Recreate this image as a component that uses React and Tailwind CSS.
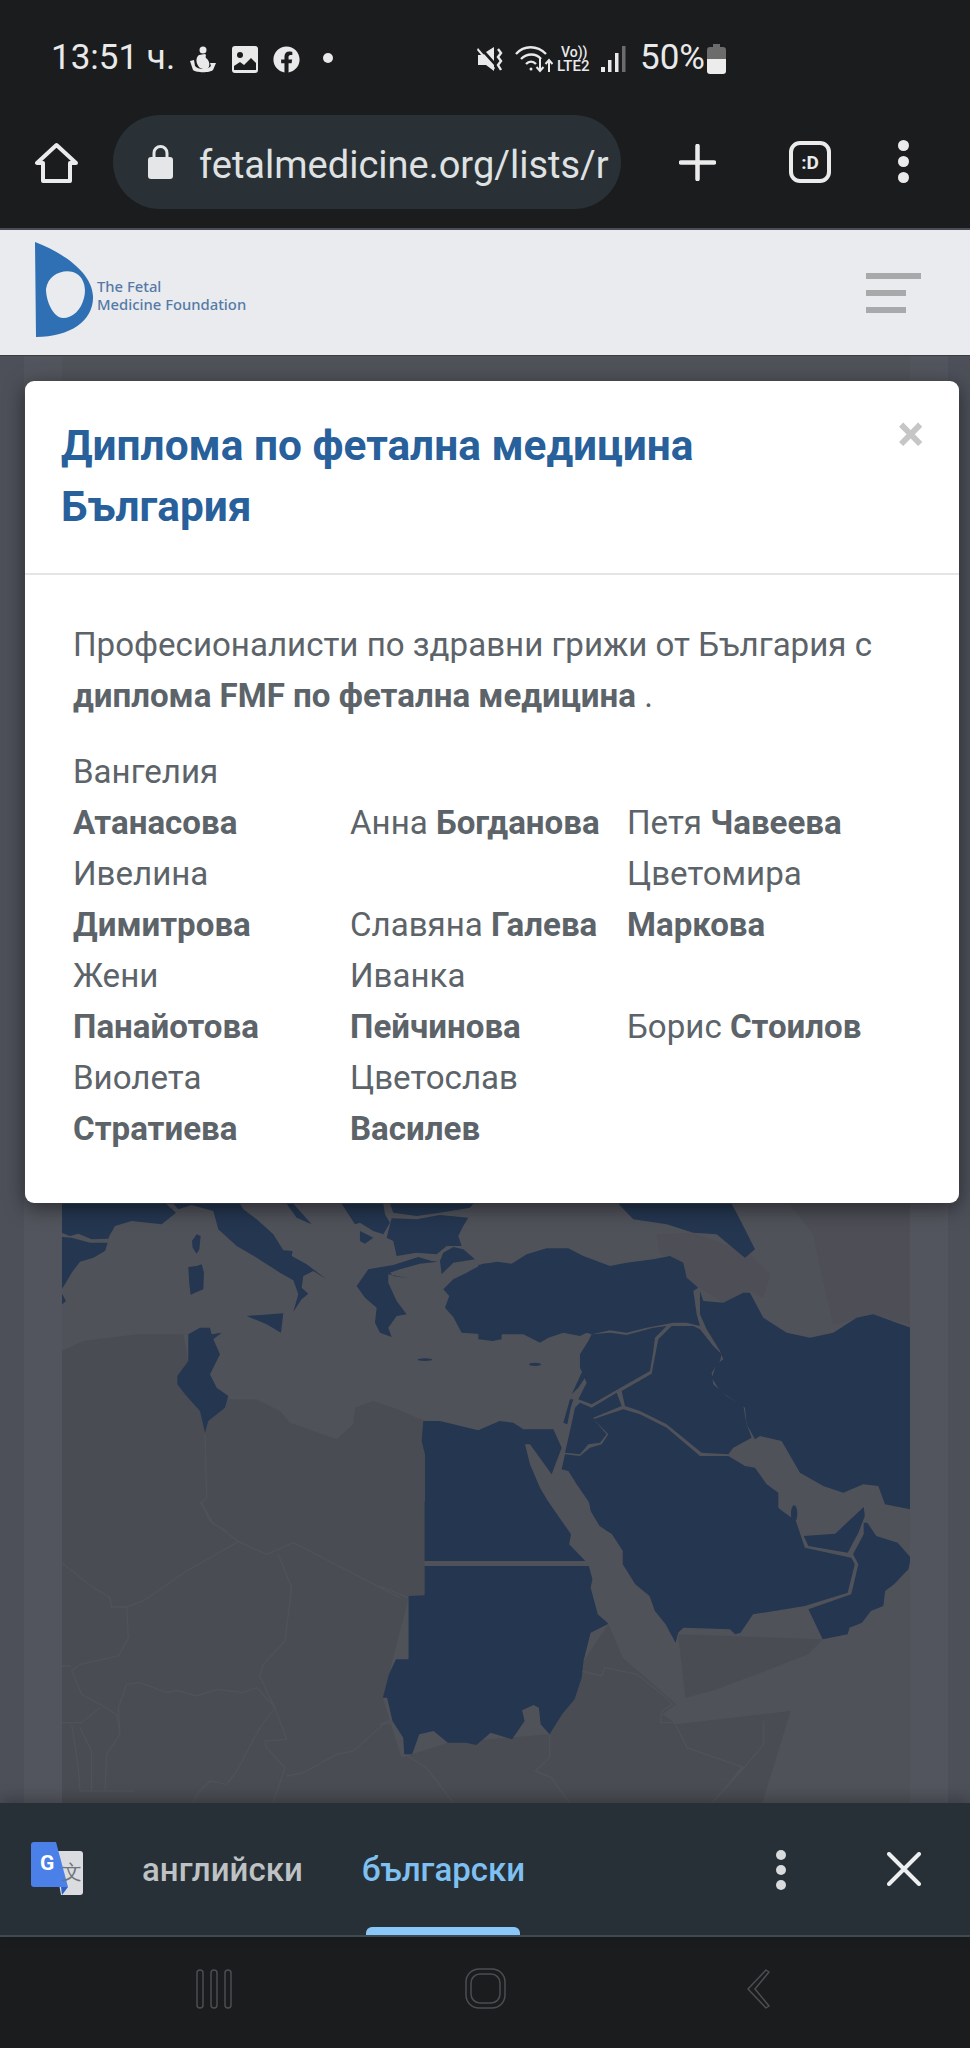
import React from "react";
import { FaFacebook } from "react-icons/fa";

const names = [
  ["Вангелия", "Атанасова"],
  ["Анна", "Богданова"],
  ["Петя", "Чавеева"],
  ["Ивелина", "Димитрова"],
  ["Славяна", "Галева"],
  ["Цветомира", "Маркова"],
  ["Жени", "Панайотова"],
  ["Иванка", "Пейчинова"],
  ["Борис", "Стоилов"],
  ["Виолета", "Стратиева"],
  ["Цветослав", "Василев"],
];

const StatusBar = () => (
  <div className="h-[115px] flex items-start pt-[38px] text-[#e9e9e9]">
    <span className="ml-[51px] w-[139px] text-[35px] leading-[40px] whitespace-nowrap">13:51 ч.</span>
    {/* notification icons */}
    <svg className="mt-[8px]" width="26" height="27" viewBox="0 0 26 27" fill="currentColor">
      <circle cx="13" cy="4" r="3.500" />
      <path d="M9 9C5 12 6 18 10 22L16 24C20 22 21 16 16 12C15 10 17 9 15 8Z" />
      <path d="M0 15L4 14L5 20C8 24 18 24 21 20L20 17L26 17L23 24C20 27 6 27 3 24Z" />
    </svg>
    <svg className="ml-[16px] mt-[8px]" width="26" height="27" viewBox="0 0 26 27">
      <rect width="26" height="27" rx="3" fill="currentColor" />
      <circle cx="8" cy="9" r="3" fill="#1a1c1e" />
      <path d="M2 24v-4l6-4 4 3 7-7 5 5v7z" fill="#1a1c1e" />
    </svg>
    <FaFacebook className="ml-[15px] mt-[8px]" size={27} />
    <span className="ml-[23px] mt-[15px] w-[10px] h-[10px] rounded-full bg-current" />

    {/* system icons */}
    <svg className="ml-[144px] mt-[8px]" width="27" height="27" viewBox="0 0 27 27" fill="currentColor">
      <path d="M1 9h5l1-1 10 11v6l-8-6H1z" />
      <path d="M9 6l8-5v14z" />
      <path d="M1 2l17 20-1.500 2L0 4z" />
      <path d="M21 3l3 4-3 4 3 4-3 4 3 5" fill="none" stroke="currentColor" strokeWidth="2.400" />
    </svg>
    <svg className="ml-[11px] mt-[7px]" width="38" height="28" viewBox="0 0 38 28" fill="none" stroke="currentColor" strokeWidth="2.400">
      <path d="M1 9c8-9 21-9 30 0" />
      <path d="M6 14c6-6 15-6 20 0" />
      <path d="M11 19c3-3 7-3 10 0" />
      <circle cx="16" cy="24" r="1.500" fill="currentColor" stroke="none" />
      <path d="M25 14v12m-3.500-4l3.500 4 3.500-4M34 27V15m-3.500 4l3.500-4 3.500 4" strokeWidth="2" />
    </svg>
    <div className="ml-[4px] mt-[7px] w-[38px] flex flex-col leading-none font-medium">
      <span className="text-[14px] leading-[14px] pl-[4px] whitespace-nowrap">Vo))</span>
      <span className="text-[15px] leading-[15px] whitespace-nowrap">LTE2</span>
    </div>
    <svg className="ml-[4px] mt-[7px]" width="27" height="28" viewBox="0 0 27 28">
      <rect x="2" y="22" width="4" height="5" fill="currentColor" />
      <rect x="9" y="15" width="3.500" height="12" fill="currentColor" />
      <rect x="16" y="8" width="3.500" height="19" fill="currentColor" />
      <rect x="23" y="1" width="3.500" height="26" fill="#6c6c6c" />
    </svg>
    <span className="ml-[14px] w-[67px] text-[35px] leading-[40px] whitespace-nowrap">50%</span>
    <svg className="mt-[6px]" width="19" height="30" viewBox="0 0 19 30">
      <path d="M6 0h7v3h3a3 3 0 013 3v9H0V6a3 3 0 013-3h3z" fill="#6c6c6c" />
      <path d="M0 15h19v12a3 3 0 01-3 3H3a3 3 0 01-3-3z" fill="#ececec" />
    </svg>
  </div>
);

const Toolbar = () => (
  <div className="h-[113px] flex items-start text-[#ebebeb]">
    <svg className="ml-[35px] mt-[27px]" width="43" height="42" viewBox="0 0 43 42" fill="none" stroke="currentColor" strokeWidth="4" strokeLinejoin="round">
      <path d="M21.500 3L2 21h6v18h27V21h6z" />
    </svg>
    <div className="ml-[35px] w-[508px] h-[94px] rounded-full bg-[#293136] flex items-center">
      <svg className="ml-[35px]" width="25" height="34" viewBox="0 0 25 34">
        <path d="M6 13V8a6.500 6.500 0 0113 0v5" fill="none" stroke="#e4e6e7" strokeWidth="3" />
        <rect y="12" width="25" height="22" rx="3" fill="#e4e6e7" />
      </svg>
      <span className="ml-[26px] pt-[5px] text-[38px] leading-[48px] text-[#dfe1e2] whitespace-nowrap">
        fetalmedicine.org/lists/r
      </span>
    </div>
    <svg className="ml-[58px] mt-[29px]" width="37" height="37" viewBox="0 0 37 37" stroke="currentColor" strokeWidth="4.500" strokeLinecap="round">
      <path d="M18.500 2v33M2 18.500h33" />
    </svg>
    <div className="ml-[73px] mt-[26px] w-[42px] h-[42px] rounded-[11px] border-[4px] border-current flex items-center justify-center text-[19px] leading-none font-bold">
      :D
    </div>
    <div className="ml-[67px] mt-[25px] flex flex-col gap-[5px]">
      <span className="w-[11px] h-[11px] rounded-full bg-current" />
      <span className="w-[11px] h-[11px] rounded-full bg-current" />
      <span className="w-[11px] h-[11px] rounded-full bg-current" />
    </div>
  </div>
);

const SiteHeader = () => (
  <div className="h-[125px] bg-[#e9ebef] flex items-start">
    <svg className="ml-[35px] mt-[12px]" width="60" height="96" viewBox="0 0 60 96">
      <path
        fillRule="evenodd"
        fill="#2f6fb3"
        d="M0 0C29 11 57 31 58 54C59 78 36 95 1 95ZM11 47C13 33 27 27 38 30C48 33 52 45 49 56C46 68 38 76 28 76C19 76 11 60 11 47Z"
      />
    </svg>
    <div className="ml-[2px] mt-[47px] font-['Noto_Sans',sans-serif] font-medium text-[14.800px] leading-[18px] text-[#557aa6] whitespace-nowrap">
      <div>The Fetal</div>
      <div>Medicine Foundation</div>
    </div>
    <div className="ml-auto mr-[49px] mt-[43px] w-[55px] flex flex-col gap-[11px]">
      <span className="h-[6px] w-[55px] bg-[#a7a9ab]" />
      <span className="h-[6px] w-[40px] bg-[#a7a9ab]" />
      <span className="h-[6px] w-[40px] bg-[#a7a9ab]" />
    </div>
  </div>
);

const BLUE = "#243650";
const DARK = "#4a4c54";
const LINE = "#50525a";

// traced in crop coordinates, each group maps one crop back to page pixels
const MapSvg = () => (
  <svg className="w-[848px] h-[1447px]" viewBox="62 355 848 1447" preserveAspectRatio="none">
    <rect x="62" y="355" width="848" height="1447" fill="#50525a" />

    {/* darker land */}
    <g transform="translate(40 1190) scale(.3333)" fill={DARK}>
      <path d="M64 480L130 450L290 430L430 430L445 510L412 560L480 660L505 690L565 625L650 625L720 660L750 695L890 745L940 700L945 650L1000 630L1060 650L1155 690L1155 1100L64 1100Z" />
    </g>
    <g transform="translate(480 1190) scale(.3333)" fill="#4d4e56">
      <path d="M1020 230L1060 400L1180 370L1292 400L1292 40L930 40L1000 130Z" />
      <path d="M530 130L640 125L810 190L870 250L850 320L810 300L730 335L660 290L620 260L610 215L540 190Z" />
    </g>
    <g transform="translate(380 1500) scale(.357 .3333)" fill={DARK}>
      <path d="M0 0L125 0L125 290L80 290L8 590L60 770L190 725L475 700L570 480L640 370L680 470L830 610L790 640L1010 800L930 910L0 910Z" />
      <path d="M835 400L1240 415L1200 460L1080 510L930 570L855 590Z" />
      <path d="M830 670L1150 630L1070 910L930 910L1020 800L860 740Z" />
    </g>
    <g transform="translate(0 1500) scale(.3333)" fill={DARK}>
      <path d="M186 0H1140V930H186Z" />
    </g>

    {/* faint country borders */}
    <g transform="translate(0 1500) scale(.3333)" fill="none" stroke={LINE} strokeWidth="4">
      <path d="M600 0L630 60L660 80L715 122L800 160L835 145L880 125L1200 290" />
      <path d="M715 122L560 210L430 300L380 318L335 318L330 290L280 260L185 185" />
      <path d="M380 318L385 410L355 465L240 490L215 510L245 580L300 610L350 640L360 700L320 760L315 870" />
      <path d="M835 160L875 260L855 420L790 490L780 525L800 570L825 620" />
      <path d="M380 550L420 545L500 575L530 568L590 585L650 565L730 575L770 560L825 620L780 680L710 810L680 850L630 840L590 880L580 905" />
      <path d="M825 620L860 715L795 720L800 740L855 800L820 905" />
      <path d="M380 550L355 620L360 700M185 665L245 665L300 620M215 670L235 800L240 870M240 680L275 750L275 870" />
      <path d="M860 825L910 815L1010 760L1060 750L1150 670L1200 660M185 495L215 495M240 870L400 870" />
    </g>
    <g transform="translate(380 1500) scale(.357 .3333)" fill="none" stroke={LINE} strokeWidth="4">
      <path d="M565 510L620 525L630 500L720 520L790 580L820 610L790 630L785 665L825 665L860 740L1020 800L1075 730L1075 660" />
      <path d="M1020 800L930 905M0 255L80 290M0 670L35 655M70 760L130 800L205 905M475 700L475 770L435 810L480 830L530 905" />
    </g>
    <g transform="translate(40 1190) scale(.3333)" fill="none" stroke={LINE} strokeWidth="4">
      <path d="M495 730L500 920L485 935L520 1000L560 1020" />
    </g>

    {/* highlighted countries, Europe side */}
    <g transform="translate(40 1190) scale(.3333)" fill={BLUE}>
      <path d="M64 38L378 38L408 65L365 100L275 90L225 105L208 135L205 143L155 145L115 128L90 135L64 125Z" />
      <path d="M64 138L95 140L150 155L203 155L195 180L160 200L120 212L95 245L75 280L64 295Z" />
      <path d="M64 305L78 330L64 342Z" />
      <path d="M470 130L482 135L478 175L470 188L458 170L456 150Z" />
      <path d="M445 228L470 225L485 220L492 245L490 295L465 305L452 312L448 280Z" />
      <path d="M400 38L415 55L455 42L520 60L535 115L590 165L650 200L720 245L760 268L775 310L760 362L785 325L805 308L785 290L790 255L820 240L860 265L800 220L755 195L758 180L730 178L700 130L650 85L610 55L600 38Z" />
      <path d="M740 38L760 38L815 100L770 80Z" />
      <path d="M905 38L1030 38L1035 70L1050 95L1030 130L1000 120L960 95L945 100Z" />
      <path d="M960 120L1000 140L975 158L960 150Z" />
      <path d="M1050 38L1300 38L1290 50L1200 65L1130 75L1060 65Z" />
      <path d="M1055 82L1130 85L1200 72L1285 80L1270 105L1255 135L1265 165L1220 165L1190 190L1130 185L1070 195L1060 150L1040 140Z" />
      <path d="M950 285L985 235L1060 222L1135 198L1175 210L1195 212L1140 218L1080 235L1050 245L1060 255L1105 262L1045 250L1045 275L1070 330L1100 370L1070 375L1045 410L1055 438L1020 425L1005 395L1010 350L975 320Z" />
      <path d="M1210 185L1240 168L1270 175L1305 205L1240 215L1205 250L1200 210Z" />
      <path d="M1385 215L1330 218L1280 245L1240 265L1210 295L1228 315L1215 350L1240 378L1265 425L1330 430L1355 450L1385 445Z" />
      <path d="M445 430L480 410L510 410L515 430L545 425L520 445L540 490L510 550L530 590L565 615L555 650L505 690L495 725L480 660L435 610L412 580L412 555L445 510Z" />
      <path d="M620 375L730 367L723 425L680 400Z" />
      <ellipse cx="1155" cy="506" rx="22" ry="4" />
      <path d="M1155 1020L1155 790L1145 750L1150 690L1200 690L1315 718L1380 690L1380 1020Z" />
    </g>

    {/* highlighted countries, Middle East */}
    <g transform="translate(480 1190) scale(.3333)" fill={BLUE}>
      <path d="M-5 222L50 212L95 218L140 190L200 172L265 172L310 195L390 225L440 215L520 205L570 195L610 215L620 260L655 290L640 300L650 370L660 405L620 395L580 395L500 410L440 425L390 418L335 430L320 425L300 435L250 425L205 440L180 455L130 430L65 430L40 450L-5 445Z" />
      <path d="M660 300L670 330L730 335L790 305L810 305L850 380L920 425L990 440L1060 425L1130 380L1180 370L1250 395L1292 410L1292 955L1215 940L1195 885L1150 880L1090 905L1030 885L960 845L905 750L840 735L825 745L800 700L795 650L720 600L695 560L710 520L730 505L720 480L680 415L660 370Z" />
      <path d="M335 430L390 425L440 432L520 410L560 405L525 440L520 480L510 540L335 640L295 625L320 575L300 530L300 490L325 450Z" />
      <path d="M305 545L322 550L295 590L275 610Z" />
      <path d="M575 405L640 405L660 415L700 465L725 490L720 510L695 545L700 580L740 615L790 645L800 700L815 740L760 770L745 790L665 785L560 700L480 660L435 645L425 600L515 548L530 470L535 445Z" />
      <path d="M300 635L335 650L410 605L425 645L340 680L345 690L380 730L360 755L325 760L300 790L255 785L270 720L285 650Z" />
      <path d="M270 625L280 625L272 650L262 700L250 695Z" />
      <path d="M-5 720L60 690L100 695L130 715L220 715L245 770L215 850L190 815L150 760L135 760L150 820L180 890L230 975L265 1020L-5 1020Z" />
      <path d="M255 790L300 795L330 770L365 760L385 730L340 685L430 655L480 670L560 710L660 795L745 795L795 825L825 830L860 880L895 905L895 950L930 1000L950 1020L380 1020L345 960L290 880L265 840L245 835Z" />
      <path d="M415 38L755 38L785 95L825 175L795 200L770 180L710 130L640 125L560 100L460 85Z" />
      <ellipse cx="165" cy="520" rx="18" ry="5" />
    </g>

    {/* highlighted countries, south */}
    <g transform="translate(380 1500) scale(.357 .3333)" fill={BLUE}>
      <path d="M125 0L470 0L535 100L530 130L575 180L125 180Z" />
      <path d="M125 195L585 195L595 235L590 260L610 340L640 368L590 395L570 480L565 530L545 595L510 640L475 700L450 670L445 620L430 612L398 628L405 660L370 715L310 695L270 732L240 725L190 725L150 690L110 700L90 760L68 760L65 710L35 660L20 590L8 590L25 520L45 475L80 475L80 285L125 283Z" />
      <path d="M585 0L1112 0L1115 20L1165 60L1190 140L1320 170L1330 190L1310 275L1190 315L1045 340L1010 395L995 400L980 385L850 380L835 395L828 425L800 370L770 330L755 285L715 250L680 190L680 150L650 100L615 75L590 30Z" />
      <ellipse cx="1160" cy="38" rx="9" ry="25" />
      <path d="M1187 105L1275 98L1355 18L1358 45L1340 95L1310 155L1200 135Z" />
      <path d="M1355 65L1365 65L1390 105L1450 125L1487 170L1480 205L1440 250L1415 270L1410 315L1375 330L1350 365L1315 380L1310 400L1240 415L1200 325L1320 280L1340 190L1325 160L1355 100Z" />
    </g>
  </svg>
);

const Modal = () => (
  <div className="absolute left-[25px] top-[25px] w-[934px] h-[822px] bg-white rounded-[9px] shadow-[0_5px_20px_rgba(0,0,0,0.5)]">
    <div className="relative h-[194px] border-b-2 border-[#e5e5e5] pl-[36px] pt-[34px]">
      <h2 className="text-[42.400px] leading-[61px] font-bold text-[#27609b]">
        Диплома по фетална медицина
        <br />
        България
      </h2>
      <span className="absolute right-[35px] top-[25px] text-[50px] leading-[56px] font-bold text-[#c6c6c6]">×</span>
    </div>
    <div className="pl-[48px] pt-[44px] text-[#5c6369] text-[33.100px] leading-[51px]">
      <p>
        Професионалисти по здравни грижи от България с <br />
        <b>диплома FMF по фетална медицина</b> .
      </p>
      <div className="mt-[25px] grid grid-cols-[277px_277px_277px] items-end">
        {names.map(([first, last]) => (
          <div key={last} className="pr-[15px]">
            {first} <b>{last}</b>
          </div>
        ))}
      </div>
    </div>
  </div>
);

const TranslateBar = () => (
  <div className="relative h-[134px] bg-[#273036] border-b-2 border-[#404b51] flex items-start shadow-[0_-4px_14px_rgba(0,0,0,0.25)]">
    <svg className="ml-[31px] mt-[39px]" width="52" height="53" viewBox="0 0 52 53">
      <path d="M22 9h27a3 3 0 013 3v38a3 3 0 01-3 3H30z" fill="#dadce0" />
      <path d="M3 0h22l12 45H3a3 3 0 01-3-3V3a3 3 0 013-3z" fill="#4a80e8" />
      <path d="M30 45l7 0-6 8z" fill="#2f5fc4" />
      <text x="9" y="28" fontSize="21" fontWeight="700" fill="#ffffff">G</text>
      <text x="31" y="37" fontSize="20" fill="#70757a">文</text>
    </svg>
    <span className="ml-[59px] mt-[42px] w-[160px] text-[33px] leading-[50px] font-medium text-[#bec2c5] whitespace-nowrap">английски</span>
    <span className="ml-[60px] mt-[42px] text-[33px] leading-[50px] font-medium text-[#7fc0f2] whitespace-nowrap">български</span>
    <div className="absolute left-[366px] bottom-0 w-[154px] h-[8px] rounded-t-[6px] bg-[#8ac7f9]" />
    <div className="ml-auto mt-[47px] flex flex-col gap-[5px]">
      <span className="w-[10px] h-[10px] rounded-full bg-[#d8dadb]" />
      <span className="w-[10px] h-[10px] rounded-full bg-[#d8dadb]" />
      <span className="w-[10px] h-[10px] rounded-full bg-[#d8dadb]" />
    </div>
    <svg className="ml-[101px] mr-[49px] mt-[49px]" width="34" height="34" viewBox="0 0 34 34" stroke="#eceeef" strokeWidth="4" strokeLinecap="round">
      <path d="M2 2l30 30M32 2L2 32" />
    </svg>
  </div>
);

const NavBar = () => (
  <div className="h-[111px] bg-[#1a1c1e] flex items-start">
    <svg className="ml-[196px] mt-[32px]" width="36" height="40" viewBox="0 0 36 40" fill="none" stroke="#4b4e51" strokeWidth="1.500">
      <rect x="1" y="1" width="6" height="38" rx="3" />
      <rect x="15" y="1" width="6" height="38" rx="3" />
      <rect x="29" y="1" width="6" height="38" rx="3" />
    </svg>
    <svg className="ml-[233px] mt-[31px]" width="41" height="41" viewBox="0 0 41 41" fill="none" stroke="#4b4e51" strokeWidth="1.500">
      <rect x="1" y="1" width="39" height="39" rx="13" />
      <rect x="6" y="6" width="29" height="29" rx="9" />
    </svg>
    <svg className="ml-[241px] mt-[32px]" width="23" height="40" viewBox="0 0 23 40" fill="none" stroke="#4b4e51" strokeWidth="1.500" strokeLinejoin="round">
      <path d="M19 1l3 2L8 20l14 17-3 2L1 20z" />
    </svg>
  </div>
);

export default function App() {
  return (
    <div className="w-[970px] h-[2048px] flex flex-col bg-[#1a1c1e] overflow-hidden font-[Roboto,sans-serif]">
      <StatusBar />
      <Toolbar />
      <div className="h-[2px] bg-[#4b4e56]" />
      <SiteHeader />

      <div className="relative h-[1448px] border-t border-[#3b3d44] bg-[#4c4f59] flex overflow-hidden">
        <div className="w-[24px] bg-[#4d5059]" />
        <div className="w-[38px] bg-[#53555e]" />
        <MapSvg />
        <div className="w-[38px] bg-[#53555e]" />
        <div className="flex-1 bg-[#4d5059]" />
        <Modal />
      </div>

      <TranslateBar />
      <NavBar />
    </div>
  );
}
